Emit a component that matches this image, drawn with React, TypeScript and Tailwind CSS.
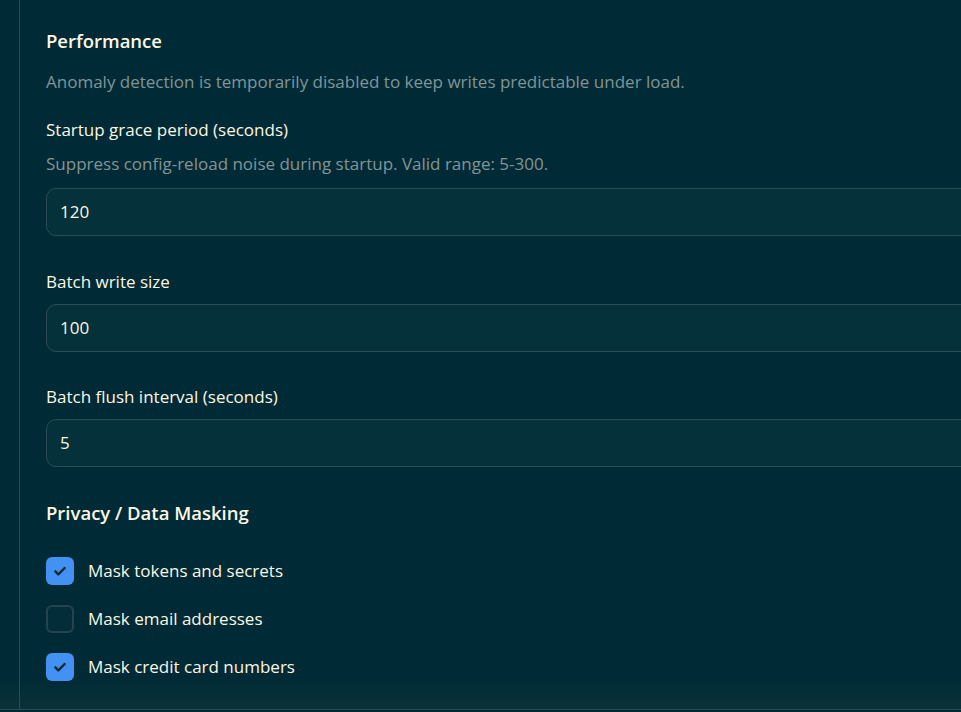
import React from "react";

const font = { fontFamily: '"Open Sans", "Noto Sans", sans-serif' };

function Check() {
  return (
    <svg width="16" height="16" viewBox="0 0 24 24" fill="none" stroke="#0b2a35" strokeWidth="3.6" strokeLinecap="round" strokeLinejoin="round">
      <path d="M5 12.5l4.5 4.5L19 7.5" />
    </svg>
  );
}

function Field({ label, hint, value, mt }: { label: string; hint?: string; value: string; mt: string }) {
  return (
    <div className={`flex flex-col ${mt}`}>
      <div className="h-6 leading-6 text-[17px] text-[#fdf6e3]">{label}</div>
      {hint && <div className="mt-[10px] h-6 leading-6 text-[17px] text-[#839496]">{hint}</div>}
      <div className={`${hint ? "mt-3" : "mt-[10px]"} h-12 w-[1000px] rounded-[10px] border border-[#2b4c55] bg-[#05313b] flex items-center pl-[13px] text-[17px] text-[#fdf6e3]`}>
        {value}
      </div>
    </div>
  );
}

function Box({ checked, label }: { checked: boolean; label: string }) {
  return (
    <div className="flex items-center h-7 gap-[14px]">
      {checked ? (
        <div className="w-7 h-7 rounded-[6px] bg-[#4391f2] flex items-center justify-center">
          <Check />
        </div>
      ) : (
        <div className="w-7 h-7 rounded-[6px] border-2 border-[#24454d] bg-[#032d38]" />
      )}
      <span className="text-[17px] text-[#fdf6e3]">{label}</span>
    </div>
  );
}

export default function App() {
  return (
    <div className="w-[961px] h-[712px] bg-[#002b36] overflow-hidden relative" style={font}>
      <div className="absolute left-0 right-0 top-[680px] h-[30px] bg-gradient-to-b from-[#002b36] to-[#0b3239] border-b border-[#2b4a52]" />
      <div className="relative ml-[19px] h-[710px] border-l border-[#2b4a52] pl-[26px] pt-[27px] flex flex-col">
        <div className="h-7 leading-7 text-[18.5px] font-semibold text-[#fdf6e3]">Performance</div>
        <div className="mt-[15px] h-6 leading-6 text-[17px] text-[#839496]">
          Anomaly detection is temporarily disabled to keep writes predictable under load.
        </div>
        <Field mt="mt-6" label="Startup grace period (seconds)" hint="Suppress config-reload noise during startup. Valid range: 5-300." value="120" />
        <Field mt="mt-[34px]" label="Batch write size" value="100" />
        <Field mt="mt-[33px]" label="Batch flush interval (seconds)" value="5" />
        <div className="mt-8 h-7 leading-7 text-[18.5px] font-semibold text-[#fdf6e3]">Privacy / Data Masking</div>
        <div className="mt-[30px] flex flex-col gap-5">
          <Box checked label="Mask tokens and secrets" />
          <Box checked={false} label="Mask email addresses" />
          <Box checked label="Mask credit card numbers" />
        </div>
      </div>
    </div>
  );
}
